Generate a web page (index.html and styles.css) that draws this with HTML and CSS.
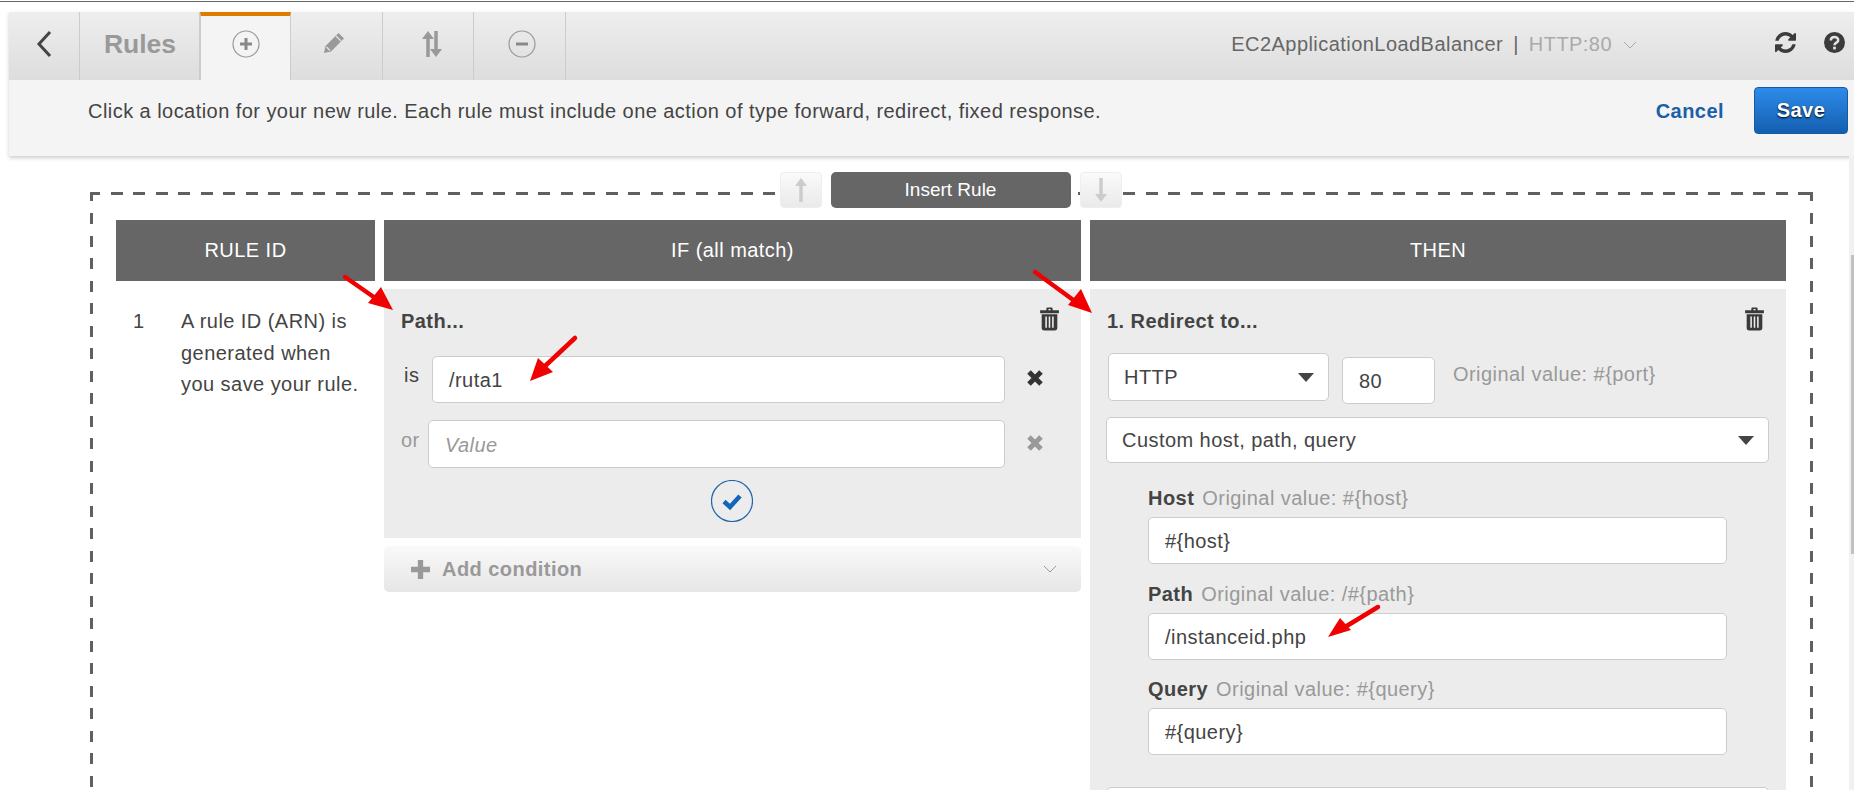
FILE: index.html
```html
<!DOCTYPE html>
<html lang="en">
<head>
    <meta charset="UTF-8">
    <meta name="viewport" content="width=device-width, initial-scale=1.0">
    <title>Rules</title>
    <link rel="stylesheet" href="styles.css">
</head>
<body>
    <div class="page">
        <div class="toolbar">
            <div class="tabs">
                <a class="tab tab-back">
                    <svg width="18" height="28" viewBox="0 0 18 28"><path d="M15 2 L4 14 L15 26" fill="none" stroke="#444" stroke-width="3"/></svg>
                </a>
                <a class="tab tab-title">Rules</a>
                <a class="tab tab-icon tab-active">
                    <svg width="28" height="28" viewBox="0 0 28 28"><circle cx="14" cy="14" r="13" fill="none" stroke="#999" stroke-width="1.200"/><path d="M14 8 V20 M8 14 H20" stroke="#888" stroke-width="3"/></svg>
                </a>
                <a class="tab tab-icon">
                    <svg class="icon-pencil" width="22" height="22" viewBox="0 0 22 22"><path d="M15.500 1 L21 6.500 L8 19.500 L1 21 L2.500 14 Z" fill="#999"/><path d="M13 4 L18 9 M3.500 15 L7 18.500" stroke="#e6e6e6" stroke-width="1.200"/></svg>
                </a>
                <a class="tab tab-icon">
                    <svg class="icon-sort" width="20" height="26" viewBox="0 0 20 26"><path d="M6 26 V6 M14 0 V20" stroke="#999" stroke-width="3.500"/><path d="M0 8 L6 0 L12 8 Z M8 18 L14 26 L20 18 Z" fill="#999"/></svg>
                </a>
                <a class="tab tab-icon">
                    <svg width="28" height="28" viewBox="0 0 28 28"><circle cx="14" cy="14" r="13" fill="none" stroke="#999" stroke-width="1.200"/><path d="M8 14 H20" stroke="#888" stroke-width="3"/></svg>
                </a>
                <div class="tabs-right">
                    <span class="lb-name">EC2ApplicationLoadBalancer</span>
                    <span class="lb-sep">|</span>
                    <span class="lb-port">HTTP:80</span>
                    <svg class="lb-chevron" width="14" height="8" viewBox="0 0 14 8"><path d="M1 1 L7 7 L13 1" fill="none" stroke="#aaa" stroke-width="1"/></svg>
                    <svg class="icon-refresh" width="21" height="21" viewBox="0 0 1536 1536"><path d="M1511 928q0 5-1 7-64 268-268 434.500t-478 166.500q-146 0-282.500-55t-243.500-157l-129 129q-19 19-45 19t-45-19-19-45v-448q0-26 19-45t45-19h448q26 0 45 19t19 45-19 45l-137 137q71 66 161 102t187 36q134 0 250-65t186-179q11-17 53-117 8-23 30-23h192q13 0 22.500 9.500t9.500 22.500zm25-800v448q0 26-19 45t-45 19h-448q-26 0-45-19t-19-45 19-45l138-138q-148-137-349-137-134 0-250 65t-186 179q-11 17-53 117-8 23-30 23h-199q-13 0-22.500-9.500t-9.500-22.500v-7q65-268 270-434.500t480-166.500q146 0 284 55.500t245 156.500l130-129q19-19 45-19t45 19 19 45z" fill="#3c3c3c"/></svg>
                    <svg class="icon-help" width="21" height="21" viewBox="0 0 20 20"><circle cx="10" cy="10" r="10" fill="#3c3c3c"/><path d="M6.500 8 C6.500 3.800 13.500 3.800 13.500 7.800 C13.500 10.300 10 10 10 12.500" fill="none" stroke="#e4e4e4" stroke-width="2.400"/><rect x="8.700" y="14" width="2.600" height="2.600" fill="#e4e4e4"/></svg>
                </div>
            </div>
            <div class="message-bar">
                <p>Click a location for your new rule. Each rule must include one action of type forward, redirect, fixed response.</p>
                <a class="cancel-link">Cancel</a>
                <button class="save-btn">Save</button>
            </div>
        </div>

        <div class="rules-box">
            <div class="insert-row">
                <button class="move-btn">
                    <svg width="14" height="26" viewBox="0 0 14 26"><path d="M7 25 V5" stroke="#ccc" stroke-width="3.500"/><path d="M1 9 L7 1 L13 9 Z" fill="#ccc"/></svg>
                </button>
                <div class="insert-btn">Insert Rule</div>
                <button class="move-btn">
                    <svg width="14" height="26" viewBox="0 0 14 26"><path d="M7 1 V21" stroke="#ccc" stroke-width="3.500"/><path d="M1 17 L7 25 L13 17 Z" fill="#ccc"/></svg>
                </button>
            </div>

            <div class="rule-grid">
                <div class="col-head">RULE ID</div>
                <div class="col-head">IF (all match)</div>
                <div class="col-head">THEN</div>

                <div class="rule-id">
                    <span class="rule-num">1</span>
                    <p>A rule ID (ARN) is<br>generated when<br>you save your rule.</p>
                </div>

                <div class="if-col">
                    <div class="panel if-panel">
                        <div class="panel-head">
                            <strong>Path...</strong>
                            <svg class="trash" width="21" height="24" viewBox="0 0 20 23"><use href="#trash-icon"/></svg>
                        </div>
                        <div class="value-row row-is">
                            <span class="word">is</span>
                            <div class="text-box">/ruta1</div>
                            <svg class="remove" width="16" height="16" viewBox="0 0 16 16"><path d="M2 2 L14 14 M14 2 L2 14" stroke="#333" stroke-width="5"/></svg>
                        </div>
                        <div class="value-row row-or">
                            <span class="word word-or">or</span>
                            <div class="text-box placeholder">Value</div>
                            <svg class="remove" width="16" height="16" viewBox="0 0 16 16"><path d="M2 2 L14 14 M14 2 L2 14" stroke="#999" stroke-width="5"/></svg>
                        </div>
                        <div class="confirm">
                            <svg width="42" height="42" viewBox="0 0 42 42"><circle cx="21" cy="21" r="20.500" fill="none" stroke="#1f64ab" stroke-width="1.200"/><path d="M13 21.500 L19 27 L29 16" fill="none" stroke="#1166bb" stroke-width="4.500"/></svg>
                        </div>
                    </div>
                    <div class="add-condition">
                        <svg width="19" height="19" viewBox="0 0 18 18"><path d="M9 0 V18 M0 9 H18" stroke="#999" stroke-width="5"/></svg>
                        <span>Add condition</span>
                        <svg class="add-chevron" width="14" height="8" viewBox="0 0 14 8"><path d="M1 1 L7 7 L13 1" fill="none" stroke="#999" stroke-width="1"/></svg>
                    </div>
                </div>

                <div class="panel then-panel">
                    <div class="panel-head">
                        <strong>1. Redirect to...</strong>
                        <svg class="trash" width="21" height="24" viewBox="0 0 20 23"><use href="#trash-icon"/></svg>
                    </div>
                    <div class="port-row">
                        <div class="select-box select-proto">HTTP<i class="caret"></i></div>
                        <div class="text-box port-box">80</div>
                        <span class="orig port-orig">Original value: #{port}</span>
                    </div>
                    <div class="select-box select-custom">Custom host, path, query<i class="caret"></i></div>
                    <div class="fields">
                        <div class="field-label"><b>Host</b> <span class="orig">Original value: #{host}</span></div>
                        <div class="text-box">#{host}</div>
                        <div class="field-label"><b>Path</b> <span class="orig">Original value: /#{path}</span></div>
                        <div class="text-box">/instanceid.php</div>
                        <div class="field-label"><b>Query</b> <span class="orig">Original value: #{query}</span></div>
                        <div class="text-box">#{query}</div>
                    </div>
                    <div class="select-box select-next"></div>
                </div>
            </div>
        </div>

        <div class="scrollbar"><div class="scroll-thumb"></div></div>

        <svg class="arrows" width="1854" height="802" viewBox="0 0 1854 802">
            <g stroke="#f00000" stroke-width="4.500" stroke-linecap="round" fill="#f00000">
                <path d="M345 277 L378 300"/>
                <path d="M1035 272 L1076 302"/>
                <path d="M575 338 L544 367"/>
                <path d="M1378 607 L1345 627"/>
            </g>
            <g fill="#f00000">
                <path d="M393 310 L368 303 L381 287 Z"/>
                <path d="M1092 313 L1068 305 L1081 289 Z"/>
                <path d="M530 381 L538 358 L553 372 Z"/>
                <path d="M1328 637 L1340 618 L1351 630 Z"/>
            </g>
        </svg>

        <svg class="defs" width="0" height="0">
            <symbol id="trash-icon" viewBox="0 0 20 23">
                <path d="M7 3 V1.500 Q7 .5 8 .5 H12 Q13 .5 13 1.500 V3 H19 V6 H1 V3 Z M9 2 V3 H11 V2 Z" fill="#3a3a3a"/>
                <path d="M2.500 7 H17.500 V20 Q17.500 22.500 15 22.500 H5 Q2.500 22.500 2.500 20 Z M6 9 V20 H7.500 V9 Z M9.250 9 V20 H10.750 V9 Z M12.500 9 V20 H14 V9 Z" fill="#3a3a3a" fill-rule="evenodd"/>
            </symbol>
        </svg>
    </div>
</body>
</html>
```

FILE: styles.css
```css
* {
    box-sizing: border-box;
}

body {
    margin: 0;
    background-color: #fff;
    font-family: "Liberation Sans", Arial, sans-serif;
    font-size: 20px;
    letter-spacing: 0.45px;
    color: #444;
}

.page {
    position: relative;
    height: 789px;
    margin-top: 1px;
    overflow: hidden;
    border-top: 1px solid #666;
    padding: 10px 0 0 9px;
}

/* toolbar */
.toolbar {
    box-shadow: 0 2px 4px rgba(0, 0, 0, 0.2);
}

.tabs {
    display: flex;
    height: 68px;
    background: linear-gradient(#eee, #ddd);
}

.tab {
    display: flex;
    align-items: center;
    justify-content: center;
    height: 68px;
    margin-right: 5px;
    padding-bottom: 4px;
    border-right: 1px solid #ccc;
}

.tab-back {
    width: 71px;
}

.tab-title {
    width: 115px;
    margin-right: 0;
    padding-right: 4px;
    font-size: 26.500px;
    font-weight: bold;
    letter-spacing: 0;
    color: #999;
}

.tab-icon {
    width: 86.500px;
}

.tab-active {
    width: 91px;
    padding-bottom: 8px;
    border-top: 4px solid #e07b00;
    border-left: 1px solid #ccc;
    background-color: #f4f4f4;
}

.icon-pencil {
    margin-right: 10px;
    margin-top: -2px;
}

.icon-sort {
    margin-left: 4px;
}

.tabs-right {
    flex: 1;
    display: flex;
    align-items: center;
    justify-content: flex-end;
    padding: 0 9px 4px 0;
}

.lb-name {
    color: #666;
}

.lb-sep {
    margin: 0 10px;
    color: #666;
}

.lb-port {
    color: #aaa;
}

.lb-chevron {
    margin: 2px 138px 0 11px;
}

.icon-refresh {
    margin-bottom: 4px;
}

.icon-help {
    margin: 0 0 4px 28px;
}

.message-bar {
    display: flex;
    align-items: center;
    height: 76px;
    padding: 0 6px 14px 79px;
    background-color: #f4f4f4;
}

.message-bar p {
    flex: 1;
    margin: 0;
}

.cancel-link {
    margin-right: 30px;
    font-weight: bold;
    color: #1a5fa8;
}

.save-btn {
    align-self: flex-start;
    width: 94px;
    height: 47px;
    margin-top: 7px;
    border: 1px solid #1a5a9c;
    border-radius: 4px;
    background: linear-gradient(#2e8bea, #135fb0);
    color: #fff;
    font-family: inherit;
    font-size: 20px;
    font-weight: bold;
    letter-spacing: 0.45px;
    text-shadow: 0 1px 2px #000;
}

/* dashed frame round the rules */
.rules-box {
    display: flow-root;
    width: 1723px;
    height: 700px;
    margin: 36px 0 0 81px;
    padding: 0 26px;
    background-image:
        repeating-linear-gradient(to right, #606060 0 10.500px, transparent 10.500px 21px, #606060 21px 22.500px),
        repeating-linear-gradient(to bottom, #606060 0 9.500px, transparent 9.500px 21px, #606060 21px 22.500px),
        repeating-linear-gradient(to bottom, #606060 0 9.500px, transparent 9.500px 21px, #606060 21px 22.500px);
    background-size: 100% 3px, 3px 100%, 3px 100%;
    background-position: 0 0, 0 0, 100% 0;
    background-repeat: no-repeat;
}

.insert-row {
    display: flex;
    justify-content: center;
    gap: 9px;
    height: 36px;
    margin: -20px 0 0 -2px;
}

.move-btn {
    display: flex;
    align-items: center;
    justify-content: center;
    width: 42px;
    height: 36px;
    padding: 0;
    border: 1px solid #eee;
    border-radius: 4px;
    background: linear-gradient(#fafafa, #eaeaea);
}

.insert-btn {
    display: flex;
    align-items: center;
    justify-content: center;
    width: 240px;
    height: 36px;
    border-radius: 5px;
    background-color: #666;
    color: #fff;
    font-size: 19px;
    letter-spacing: 0;
}

.rule-grid {
    display: grid;
    grid-template-columns: 259px 697px 696px;
    column-gap: 9px;
    row-gap: 8px;
    margin-top: 12px;
}

.col-head {
    display: flex;
    align-items: center;
    justify-content: center;
    height: 61px;
    background-color: #666;
    color: #fff;
}

.rule-id {
    display: flex;
    padding: 17px 0 0 17px;
}

.rule-num {
    flex: none;
    width: 48px;
    line-height: 31.500px;
}

.rule-id p {
    margin: 0;
    line-height: 31.500px;
}

.panel {
    background-color: #ececec;
}

.panel-head {
    display: flex;
    align-items: center;
    justify-content: space-between;
    height: 46px;
    margin-top: 9px;
}

.trash {
    margin-top: -5px;
}

.if-panel {
    height: 249px;
    padding: 0 21px 0 17px;
    overflow: hidden;
}

.value-row {
    display: flex;
    align-items: center;
    padding-right: 17px;
}

.row-is {
    margin-top: 12px;
}

.row-or {
    margin-top: 17px;
}

.word {
    flex: none;
    width: 31px;
    padding-left: 3px;
    margin-top: -8px;
}

.word-or {
    width: 27px;
    padding-left: 0;
    color: #999;
}

.text-box {
    display: flex;
    align-items: center;
    height: 47px;
    padding: 2px 16px 0;
    background-color: #fff;
    border: 1px solid #ccc;
    border-radius: 5px;
}

.value-row .text-box {
    flex: 1;
}

.row-or .text-box {
    height: 48px;
}

.placeholder {
    color: #999;
    font-style: italic;
}

.remove {
    flex: none;
    margin: -3px 0 0 22px;
}

.confirm {
    display: flex;
    justify-content: center;
    margin: 12px 0 0 3px;
}

.add-condition {
    display: flex;
    align-items: center;
    height: 46px;
    margin-top: 8px;
    padding: 0 24px 0 27px;
    border-radius: 5px;
    background: linear-gradient(#f9f9f9, #e6e6e6);
    font-weight: bold;
    color: #999;
}

.add-condition span {
    margin-left: 12px;
    flex: 1;
}

.then-panel {
    height: 520px;
    padding: 0 21px 0 17px;
    overflow: hidden;
}

.port-row {
    display: flex;
    margin-top: 9px;
    padding-left: 1px;
}

.select-box {
    display: flex;
    align-items: center;
    height: 48px;
    padding: 0 14px 0 15px;
    background-color: #fff;
    border: 1px solid #ccc;
    border-radius: 5px;
}

.select-proto {
    width: 221px;
}

.port-box {
    width: 93px;
    margin: 4px 0 0 13px;
}

.port-orig {
    margin: 10px 0 0 18px;
}

.orig {
    color: #999;
}

.select-custom {
    width: 663px;
    height: 46px;
    margin: 13px 0 0 -1px;
}

.caret {
    margin-left: auto;
    border-top: 9px solid #444;
    border-left: 8px solid transparent;
    border-right: 8px solid transparent;
}

.fields {
    width: 579px;
    margin: 19px 0 0 41px;
}

.field-label {
    height: 35px;
    line-height: 32px;
}

.field-label b {
    margin-right: 2px;
}

.fields .text-box {
    margin-bottom: 13.500px;
}

.select-next {
    width: 663px;
    margin: 32px 0 0 -1px;
}

/* browser scrollbar, beside the frame */
.scrollbar {
    position: absolute;
    top: 154px;
    right: 0;
    bottom: 0;
    width: 5px;
    background-color: #f1f1f1;
}

.scroll-thumb {
    height: 299px;
    margin: 99px 0 0 2px;
    background-color: #c1c1c1;
}

/* red arrows pasted on top of the screenshot */
.arrows {
    position: absolute;
    top: -2px;
    left: 0;
}

.defs {
    position: absolute;
}
```
